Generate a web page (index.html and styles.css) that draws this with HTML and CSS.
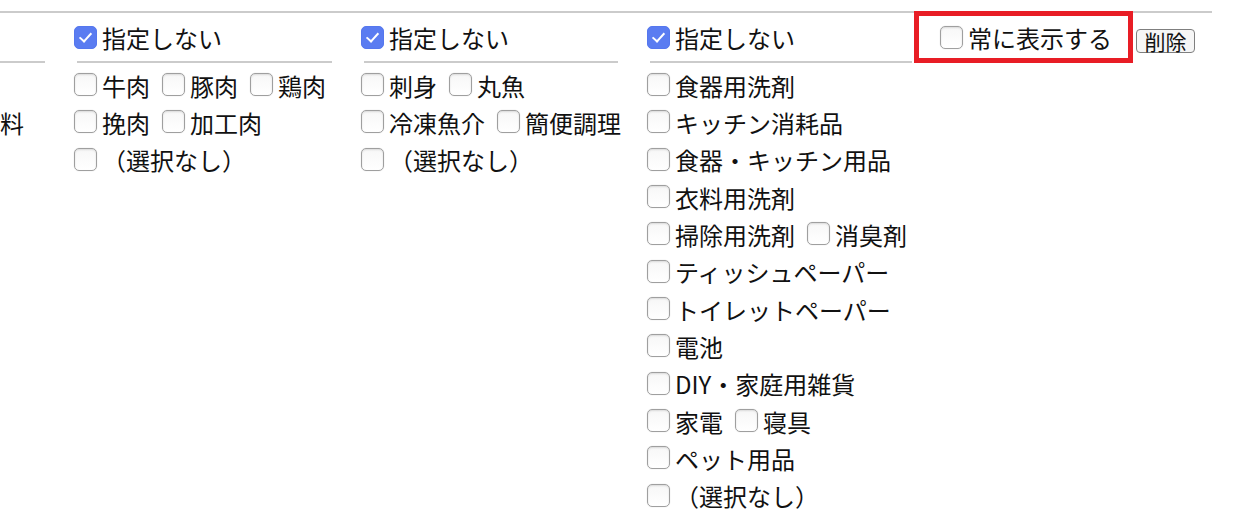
FILE: index.html
```html
<!DOCTYPE html>
<html lang="ja">
<head>
<meta charset="utf-8">
<title>カテゴリ設定</title>
<link rel="stylesheet" href="styles.css">
</head>
<body>
<div class="board">
  <div class="col col-first">
    <div class="head"></div>
    <div class="rule"></div>
    <div class="list">
      <div class="row"></div>
      <div class="row"><span class="txt">料</span></div>
      <div class="row"></div>
    </div>
  </div>

  <div class="col col-meat">
    <label class="head"><input type="checkbox" checked><span class="txt">指定しない</span></label>
    <div class="rule"></div>
    <div class="list">
      <div class="row">
        <label class="item"><input type="checkbox"><span class="txt">牛肉</span></label>
        <label class="item"><input type="checkbox"><span class="txt">豚肉</span></label>
        <label class="item"><input type="checkbox"><span class="txt">鶏肉</span></label>
      </div>
      <div class="row">
        <label class="item"><input type="checkbox"><span class="txt">挽肉</span></label>
        <label class="item"><input type="checkbox"><span class="txt">加工肉</span></label>
      </div>
      <div class="row">
        <label class="item"><input type="checkbox"><span class="txt">（選択なし）</span></label>
      </div>
    </div>
  </div>

  <div class="col col-fish">
    <label class="head"><input type="checkbox" checked><span class="txt">指定しない</span></label>
    <div class="rule"></div>
    <div class="list">
      <div class="row">
        <label class="item"><input type="checkbox"><span class="txt">刺身</span></label>
        <label class="item"><input type="checkbox"><span class="txt">丸魚</span></label>
      </div>
      <div class="row">
        <label class="item"><input type="checkbox"><span class="txt">冷凍魚介</span></label>
        <label class="item"><input type="checkbox"><span class="txt">簡便調理</span></label>
      </div>
      <div class="row">
        <label class="item"><input type="checkbox"><span class="txt">（選択なし）</span></label>
      </div>
    </div>
  </div>

  <div class="col col-daily">
    <label class="head"><input type="checkbox" checked><span class="txt">指定しない</span></label>
    <div class="rule"></div>
    <div class="list">
      <div class="row"><label class="item"><input type="checkbox"><span class="txt">食器用洗剤</span></label></div>
      <div class="row"><label class="item"><input type="checkbox"><span class="txt">キッチン消耗品</span></label></div>
      <div class="row"><label class="item"><input type="checkbox"><span class="txt">食器・キッチン用品</span></label></div>
      <div class="row"><label class="item"><input type="checkbox"><span class="txt">衣料用洗剤</span></label></div>
      <div class="row">
        <label class="item"><input type="checkbox"><span class="txt">掃除用洗剤</span></label>
        <label class="item"><input type="checkbox"><span class="txt">消臭剤</span></label>
      </div>
      <div class="row"><label class="item"><input type="checkbox"><span class="txt">ティッシュペーパー</span></label></div>
      <div class="row"><label class="item"><input type="checkbox"><span class="txt">トイレットペーパー</span></label></div>
      <div class="row"><label class="item"><input type="checkbox"><span class="txt">電池</span></label></div>
      <div class="row"><label class="item"><input type="checkbox"><span class="txt">DIY・家庭用雑貨</span></label></div>
      <div class="row">
        <label class="item"><input type="checkbox"><span class="txt">家電</span></label>
        <label class="item"><input type="checkbox"><span class="txt">寝具</span></label>
      </div>
      <div class="row"><label class="item"><input type="checkbox"><span class="txt">ペット用品</span></label></div>
      <div class="row"><label class="item"><input type="checkbox"><span class="txt">（選択なし）</span></label></div>
    </div>
  </div>

  <div class="col-actions">
    <label class="always"><input type="checkbox"><span class="txt">常に表示する</span></label>
    <button type="button" class="del">削除</button>
  </div>
</div>
</body>
</html>
```

FILE: styles.css
```css
html, body {
  margin: 0;
  padding: 0;
  background: #ffffff;
}

body {
  font-family: "Noto Sans CJK JP", "Noto Sans", sans-serif;
  font-size: 24px;
  color: #111111;
  overflow: hidden;
}

.board {
  width: 1212px;
  margin-top: 11px;
  border-top: 2px solid #cbcbcb;
  display: flex;
  align-items: flex-start;
}

.col {
  display: flex;
  flex-direction: column;
}

.col + .col {
  margin-left: 29px;
}

.col-first { width: 45px; }
.col-meat { width: 258px; }
.col-fish { width: 257px; }
.col-daily { width: 265px; }

.head {
  height: 48px;
  display: flex;
  align-items: center;
  white-space: nowrap;
}

.rule {
  height: 2px;
  background: #cbcbcb;
}

.col-meat .rule,
.col-fish .rule,
.col-daily .rule {
  margin-left: 3px;
}

.list {
  padding-top: 3px;
  display: flex;
  flex-direction: column;
}

.row {
  height: 37.33px;
  display: flex;
  align-items: center;
  white-space: nowrap;
}

.item {
  display: inline-flex;
  align-items: center;
  margin-right: 12px;
}

.txt {
  line-height: 1;
  position: relative;
  top: 1px;
}

input[type="checkbox"] {
  -webkit-appearance: none;
  appearance: none;
  box-sizing: border-box;
  width: 23px;
  height: 23px;
  min-width: 23px;
  margin: 0 5px 0 0;
  flex: none;
  border: 1px solid #9f9f9f;
  border-radius: 5px;
  background: linear-gradient(#f7f7f7, #ffffff);
  box-shadow: inset 0 1px 2px rgba(0, 0, 0, 0.12), 0 0 0 0.5px rgba(0, 0, 0, 0.05);
  position: relative;
}

input[type="checkbox"]:checked {
  background: #5a7cf1;
  border-color: #5577ee;
  box-shadow: none;
}

input[type="checkbox"]:checked::before {
  content: "";
  position: absolute;
  left: 7px;
  top: 3px;
  width: 5px;
  height: 10px;
  border-right: 2.5px solid #ffffff;
  border-bottom: 2.5px solid #ffffff;
  transform: rotate(42deg);
}

.col-actions {
  display: flex;
  align-items: flex-start;
  margin-left: 7px;
}

.always {
  margin-top: 3px;
  height: 42px;
  padding: 0 16px 0 21px;
  display: flex;
  align-items: center;
  white-space: nowrap;
  outline: 5px solid #e81d25;
}

.del {
  margin: 16px 0 0 8px;
  width: 59px;
  height: 24px;
  padding: 0;
  box-sizing: border-box;
  font-family: "Noto Sans CJK JP", "Noto Sans", sans-serif;
  font-size: 21px;
  line-height: 20px;
  color: #111111;
  background: #f6f6f6;
  border: 1.5px solid #7f7f7f;
  border-radius: 4px;
}
```
